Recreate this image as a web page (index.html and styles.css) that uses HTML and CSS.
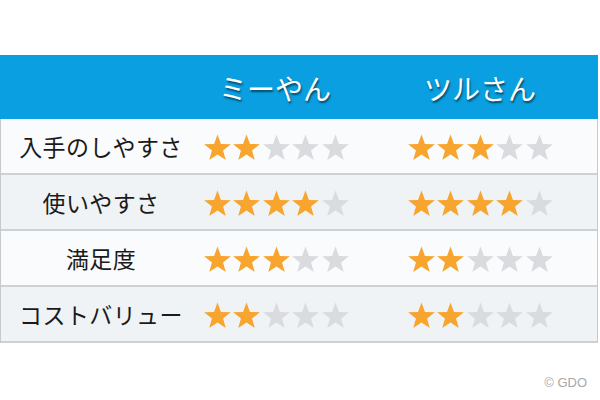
FILE: index.html
```html
<!DOCTYPE html>
<html lang="ja">
<head>
<meta charset="utf-8">
<link rel="stylesheet" href="styles.css">
</head>
<body>
<svg width="0" height="0" class="defs">
  <defs>
    <polygon id="star" points="12,0.5 15.06,8.79 23.9,9.1 16.95,14.6 19.35,23.1 12,18.2 4.65,23.1 7.05,14.6 0.1,9.1 8.94,8.79"/>
  </defs>
</svg>
<div class="table">
  <div class="row head">
    <div class="cell label"></div>
    <div class="cell c1"><span class="name">ミーやん</span></div>
    <div class="cell c2"><span class="name">ツルさん</span></div>
  </div>
  <div class="row odd">
    <div class="cell label">入手のしやすさ</div>
    <div class="cell c1" data-n="2"></div>
    <div class="cell c2" data-n="3"></div>
  </div>
  <div class="row even">
    <div class="cell label">使いやすさ</div>
    <div class="cell c1" data-n="4"></div>
    <div class="cell c2" data-n="4"></div>
  </div>
  <div class="row odd">
    <div class="cell label">満足度</div>
    <div class="cell c1" data-n="3"></div>
    <div class="cell c2" data-n="2"></div>
  </div>
  <div class="row even last">
    <div class="cell label">コストバリュー</div>
    <div class="cell c1" data-n="2"></div>
    <div class="cell c2" data-n="2"></div>
  </div>
</div>
<div class="copy">© GDO</div>
<script src="script.js"></script>
</body>
</html>
```
FILE: script.js
```js
document.querySelectorAll('[data-n]').forEach(function (cell) {
  var n = parseInt(cell.getAttribute('data-n'), 10);
  var html = '<div class="stars">';
  for (var i = 0; i < 5; i++) {
    html += '<svg class="star ' + (i < n ? 'on' : 'off') + '" viewBox="0 0 24 24"><use href="#star"/></svg>';
  }
  html += '</div>';
  cell.innerHTML = html;
});
```
FILE: styles.css
```css
html, body {
  margin: 0;
  padding: 0;
  background: #ffffff;
  width: 600px;
  height: 400px;
  overflow: hidden;
  font-family: "Noto Sans CJK JP", "Noto Sans", sans-serif;
}
.defs { position: absolute; }
.table {
  margin-top: 55px;
  width: 598px;
  box-sizing: border-box;
  border-left: 1px solid #c6c9cd;
  border-right: 1px solid #c6c9cd;
}
.row {
  display: grid;
  grid-template-columns: 200px 150px 1fr;
  height: 56px;
  box-sizing: border-box;
  border-bottom: 2px solid #cdd0d4;
}
.row.head {
  height: 64px;
  background: #0a9fe0;
  border-bottom: none;
  margin-left: -1px;
  margin-right: -1px;
}
.row.odd { background: #fafbfc; }
.row.even { background: #eff3f6; }
.cell {
  display: flex;
  align-items: center;
  justify-content: center;
}
.c2 { padding-left: 12px; }
.label {
  font-size: 23px;
  color: #1a1a1a;
  letter-spacing: 0.4px;
}
.name {
  font-size: 28px;
  color: #ffffff;
  text-shadow: 1px 2px 2px rgba(0, 0, 0, 0.55);
  margin-top: 2px;
}
.stars {
  display: flex;
  gap: 2.5px;
  margin-top: 2px;
}
.star {
  width: 27px;
  height: 27px;
}
.star.on { fill: #f7a52f; }
.star.off { fill: #dadbdf; }
.copy {
  text-align: right;
  padding-right: 13px;
  margin-top: 32px;
  font-family: "Liberation Sans", sans-serif;
  font-size: 13px;
  color: #a8a8a8;
}
```
